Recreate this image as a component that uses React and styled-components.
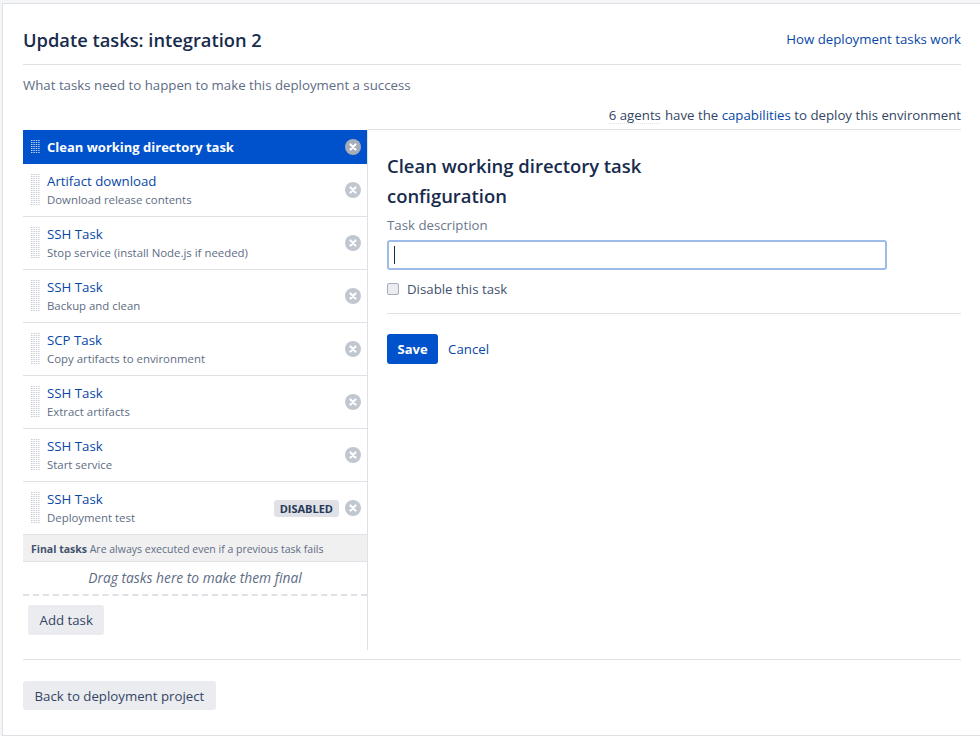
import React from "react";
import styled, { createGlobalStyle } from "styled-components";

const GlobalStyle = createGlobalStyle`
  html, body {
    margin: 0;
    padding: 0;
    background: #f4f5f7;
  }
  body {
    font-family: "Open Sans", "Liberation Sans", sans-serif;
    font-size: 13.25px;
    color: #172b4d;
  }
`;

const tasks = [
  { name: "Artifact download", desc: "Download release contents" },
  { name: "SSH Task", desc: "Stop service (install Node.js if needed)" },
  { name: "SSH Task", desc: "Backup and clean" },
  { name: "SCP Task", desc: "Copy artifacts to environment" },
  { name: "SSH Task", desc: "Extract artifacts" },
  { name: "SSH Task", desc: "Start service" },
  { name: "SSH Task", desc: "Deployment test", disabled: true },
];

const Grip = ({ rows, color }) => {
  const dots = [];
  for (let y = 0; y < rows; y++) {
    for (let x = 0; x < 4; x++) {
      dots.push(<rect key={x + "-" + y} x={x * 2.4} y={y * 2} width="1.4" height="1" fill={color} />);
    }
  }
  return (
    <GripSvg width="9" height={rows * 2} viewBox={`0 0 9 ${rows * 2}`}>
      {dots}
    </GripSvg>
  );
};

const RemoveIcon = ({ active }) => (
  <RemoveSvg width="16" height="16" viewBox="0 0 16 16">
    <circle cx="8" cy="8" r="8" fill={active ? "#a5adba" : "#c1c7d0"} />
    <path d="M5.5 5.5l5 5M10.5 5.5l-5 5" stroke="#fff" strokeWidth="2.2" strokeLinecap="round" />
  </RemoveSvg>
);

const App = () => (
  <>
    <GlobalStyle />
    <Page>
      <Header>
        <Title>Update tasks: integration 2</Title>
        <Link href="#">How deployment tasks work</Link>
      </Header>
      <Intro>What tasks need to happen to make this deployment a success</Intro>
      <Agents>
        <Dotted>6 agents</Dotted> have the&nbsp;<Link href="#">capabilities</Link>&nbsp;to deploy this environment
      </Agents>
      <Columns>
        <Sidebar>
          <ActiveRow>
            <Grip rows={7} color="#c3d3f2" />
            <ActiveName>Clean working directory task</ActiveName>
            <RemoveIcon active />
          </ActiveRow>
          {tasks.map((task, i) => (
            <TaskRow key={i}>
              <Grip rows={16} color="#c6cad2" />
              <TaskText>
                <TaskName href="#">{task.name}</TaskName>
                <TaskDesc>{task.desc}</TaskDesc>
              </TaskText>
              {task.disabled && <Badge>DISABLED</Badge>}
              <RemoveIcon />
            </TaskRow>
          ))}
          <FinalHeader>
            <b>Final tasks</b> Are always executed even if a previous task fails
          </FinalHeader>
          <DropZone>Drag tasks here to make them final</DropZone>
          <AddTask>Add task</AddTask>
        </Sidebar>
        <Config>
          <ConfigTitle>Clean working directory task configuration</ConfigTitle>
          <FieldLabel>Task description</FieldLabel>
          <TextInput>
            <Caret />
          </TextInput>
          <CheckRow>
            <CheckBox />
            Disable this task
          </CheckRow>
          <Actions>
            <SaveButton>Save</SaveButton>
            <Link href="#">Cancel</Link>
          </Actions>
        </Config>
      </Columns>
      <Footer>
        <Button>Back to deployment project</Button>
      </Footer>
    </Page>
  </>
);

const Page = styled.div`
  box-sizing: border-box;
  height: 733px;
  margin: 3px 0 0 2px;
  padding: 20px 19px 0 20px;
  background: #fff;
  border: 1px solid #dfe1e6;
  border-right: none;
  overflow: hidden;
`;

const Header = styled.div`
  display: flex;
  justify-content: space-between;
  align-items: flex-start;
  height: 40px;
  border-bottom: 1px solid #dfe1e6;
`;

const Title = styled.h1`
  margin: 0;
  font-size: 18.3px;
  line-height: 32px;
  font-weight: 600;
  color: #172b4d;
`;

const Link = styled.a`
  color: #0747a6;
  text-decoration: none;
  line-height: 30px;
`;

const Intro = styled.p`
  margin: 10px 0 0;
  line-height: 20px;
  color: #5e6c84;
`;

const Agents = styled.div`
  display: flex;
  justify-content: flex-end;
  height: 20px;
  line-height: 20px;
  margin-top: 10px;
  color: #344563;

  ${Link} {
    line-height: 20px;
  }
`;

const Dotted = styled.span`
  white-space: pre;
  margin-right: 4px;
  border-bottom: 1px dotted #dfe1e6;
  height: 18px;
`;

const Columns = styled.div`
  display: flex;
  margin-top: 4px;
`;

const Sidebar = styled.div`
  width: 345px;
  height: 520px;
  flex-shrink: 0;
  box-sizing: border-box;
  border-right: 1px solid #dfe1e6;
  margin-top: 1px;
`;

const GripSvg = styled.svg`
  display: block;
  flex-shrink: 0;
  margin-right: 7px;
`;

const RemoveSvg = styled.svg`
  display: block;
  flex-shrink: 0;
  margin-left: 6px;
`;

const ActiveRow = styled.div`
  display: flex;
  align-items: center;
  height: 34px;
  padding: 0 6px 0 8px;
  background: #0052cc;
  color: #fff;
`;

const ActiveName = styled.div`
  flex: 1;
  font-size: 13px;
  font-weight: 700;
`;

const TaskRow = styled.div`
  display: flex;
  align-items: center;
  box-sizing: border-box;
  height: 53px;
  padding: 0 6px 0 8px;
  border-bottom: 1px solid #dfe1e6;
`;

const TaskText = styled.div`
  flex: 1;
  min-width: 0;
`;

const TaskName = styled.a`
  display: block;
  font-size: 13.25px;
  line-height: 19px;
  color: #0747a6;
  text-decoration: none;
`;

const TaskDesc = styled.div`
  font-size: 11.4px;
  line-height: 18px;
  color: #5e6c84;
`;

const Badge = styled.span`
  box-sizing: border-box;
  height: 17px;
  padding: 0 6px;
  border-radius: 3px;
  background: #dfe1e6;
  color: #253858;
  font-size: 11px;
  font-weight: 700;
  line-height: 17px;
`;

const FinalHeader = styled.div`
  box-sizing: border-box;
  height: 27px;
  padding-left: 8px;
  background: #f0f0f0;
  border-bottom: 1px solid #dfe1e6;
  color: #5e6c84;
  font-size: 10.5px;
  line-height: 28px;

  b {
    color: #42526e;
  }
`;

const DropZone = styled.div`
  box-sizing: border-box;
  height: 34px;
  border-bottom: 2px dashed #dfe1e6;
  text-align: center;
  font-size: 13.8px;
  font-style: italic;
  line-height: 32px;
  color: #5e6c84;
`;

const Button = styled.button`
  display: block;
  height: 30px;
  padding: 0 11.5px;
  border: none;
  border-radius: 3px;
  background: #ebecf0;
  color: #344563;
  font: inherit;
`;

const AddTask = styled(Button)`
  margin: 9px 0 0 5px;
`;

const Config = styled.div`
  flex: 1;
  padding: 21px 0 0 19px;
  border-top: 1px solid #dfe1e6;
`;

const ConfigTitle = styled.h2`
  margin: 0;
  width: 300px;
  font-size: 18.45px;
  line-height: 30px;
  font-weight: 600;
  color: #172b4d;
`;

const FieldLabel = styled.div`
  margin-top: 4px;
  line-height: 20px;
  color: #6b778c;
`;

const TextInput = styled.div`
  display: flex;
  align-items: center;
  box-sizing: border-box;
  width: 500px;
  height: 30px;
  margin-top: 5px;
  padding-left: 5px;
  border: 2px solid #9dbcea;
  border-radius: 3px;
`;

const Caret = styled.span`
  width: 1px;
  height: 18px;
  background: #172b4d;
`;

const CheckRow = styled.label`
  display: flex;
  align-items: center;
  height: 20px;
  margin-top: 9px;
  color: #42526e;
`;

const CheckBox = styled.span`
  box-sizing: border-box;
  width: 12px;
  height: 12px;
  margin-right: 8px;
  border: 1px solid #a5adba;
  border-radius: 2px;
  background: #ebecf0;
`;

const Actions = styled.div`
  display: flex;
  align-items: center;
  gap: 10px;
  margin-top: 14px;
  padding-top: 20px;
  border-top: 1px solid #dfe1e6;
`;

const SaveButton = styled(Button)`
  padding: 0 10.5px;
  background: #0052cc;
  color: #fff;
  font-size: 13px;
  font-weight: 700;
`;

const Footer = styled.div`
  margin-top: 9px;
  padding-top: 21px;
  border-top: 1px solid #dfe1e6;

  ${Button} {
    height: 29px;
  }
`;

export default App;
